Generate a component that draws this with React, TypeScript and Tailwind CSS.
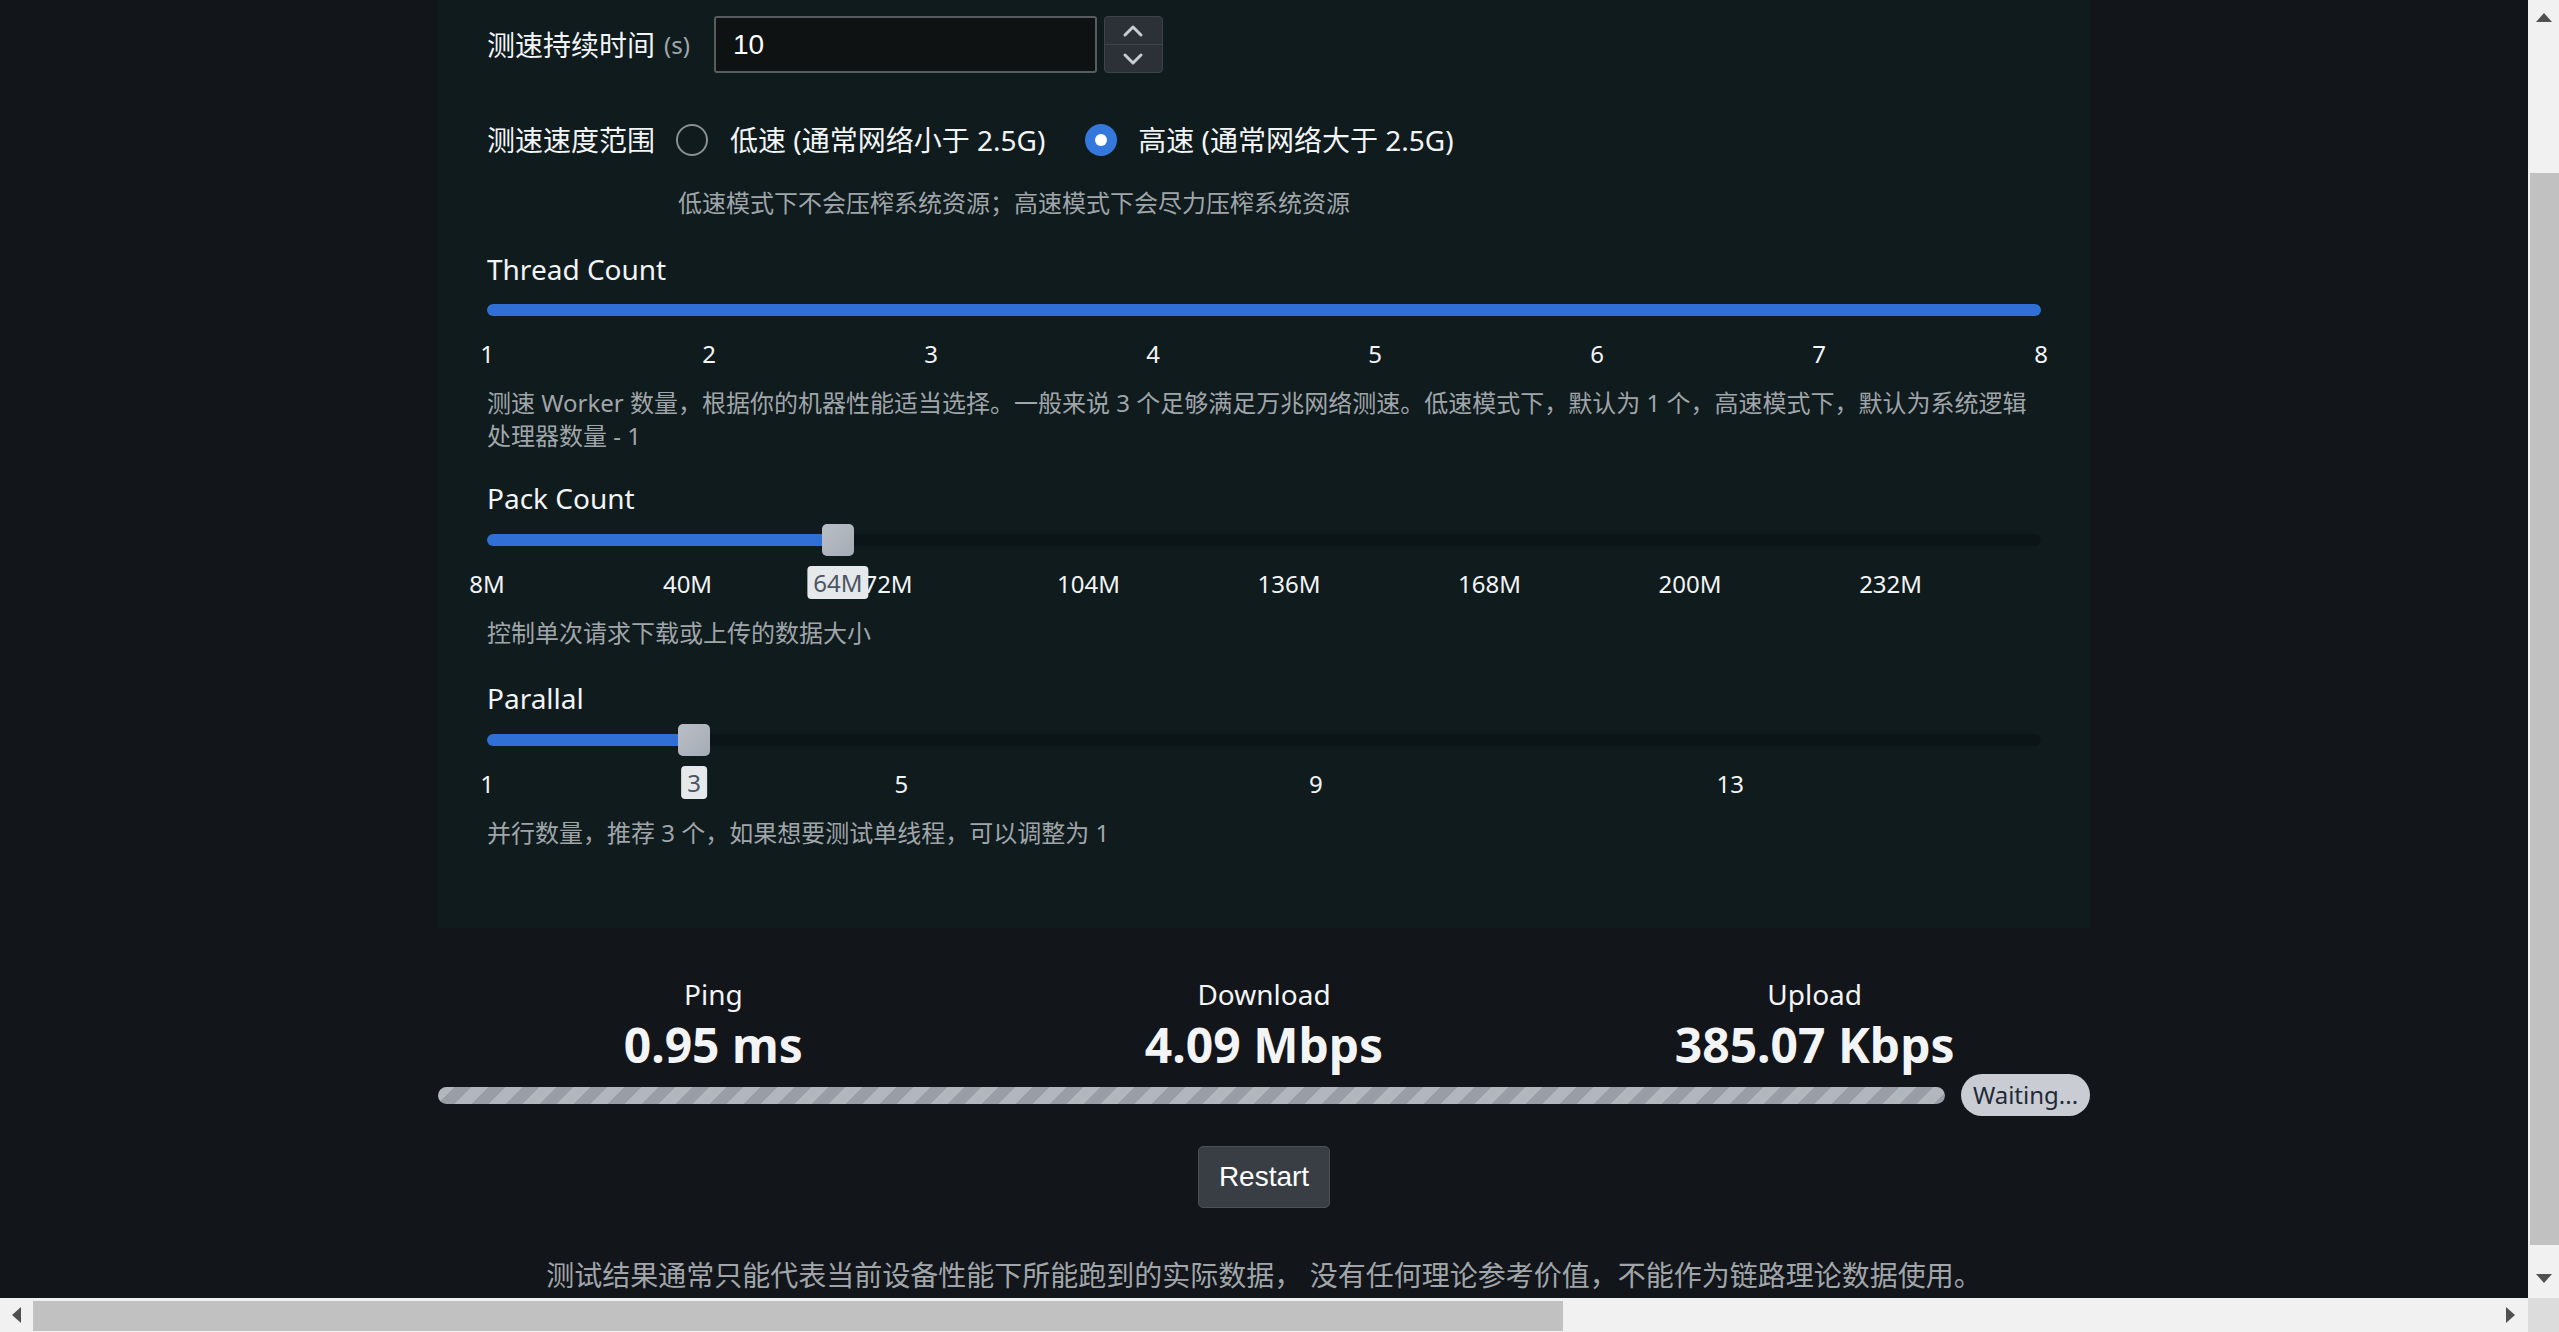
import React from "react";

const SANS = "font-['Noto_Sans','Noto_Sans_CJK_SC',sans-serif]";

function Ticks({ items, children }: { items: { label: string; pct: number }[]; children?: React.ReactNode }) {
  return (
    <div className="relative h-[33px] text-[24px] leading-[33px] text-[#f3f4f6]">
      {items.map((t) => (
        <span
          key={t.label}
          className="absolute top-0 -translate-x-1/2 whitespace-nowrap"
          style={{ left: `${t.pct}%` }}
        >
          {t.label}
        </span>
      ))}
      {children}
    </div>
  );
}

function Track({ pct, thumb }: { pct: number; thumb: boolean }) {
  return (
    <div className="relative h-[32px]">
      <div className="absolute left-0 right-0 top-[10px] h-[12px] rounded-full bg-[#0b1517]" />
      <div
        className="absolute left-0 top-[10px] h-[12px] rounded-full bg-[#2f6fd6]"
        style={{ width: `${pct}%` }}
      />
      {thumb && (
        <div
          className="absolute top-0 h-[32px] w-[32px] -translate-x-1/2 rounded-[5px] bg-gradient-to-br from-[#b9bec6] to-[#a6acb6]"
          style={{ left: `${pct}%` }}
        />
      )}
    </div>
  );
}

function Tip({ pct, text }: { pct: number; text: string }) {
  return (
    <span
      className="absolute top-[-1px] z-10 -translate-x-1/2 rounded-[4px] bg-[#e6e9ec] px-[6px] text-[24px] leading-[33px] text-[#4b5563]"
      style={{ left: `${pct}%` }}
    >
      {text}
    </span>
  );
}

function Radio({ checked }: { checked: boolean }) {
  return checked ? (
    <span className="flex h-[32px] w-[32px] shrink-0 items-center justify-center rounded-full bg-[#3478dc]">
      <span className="h-[12px] w-[12px] rounded-full bg-white" />
    </span>
  ) : (
    <span className="h-[32px] w-[32px] shrink-0 rounded-full border-2 border-[#8a8f94]" />
  );
}

function Chevron({ up }: { up: boolean }) {
  return (
    <svg width="22" height="14" viewBox="0 0 22 14" fill="none">
      <path
        d={up ? "M3 11 L11 3 L19 11" : "M3 3 L11 11 L19 3"}
        stroke="#c9cdd2"
        strokeWidth="3"
        strokeLinecap="round"
        strokeLinejoin="round"
      />
    </svg>
  );
}

export default function App() {
  const packTicks = [8, 40, 72, 104, 136, 168, 200, 232].map((v) => ({
    label: `${v}M`,
    pct: ((v - 8) / 248) * 100,
  }));
  const threadTicks = [1, 2, 3, 4, 5, 6, 7, 8].map((v) => ({ label: `${v}`, pct: ((v - 1) / 7) * 100 }));
  const parTicks = [1, 5, 9, 13].map((v) => ({ label: `${v}`, pct: ((v - 1) / 15) * 100 }));
  const packPct = ((64 - 8) / 248) * 100;
  const parPct = ((3 - 1) / 15) * 100;

  return (
    <div className={`flex h-[1332px] w-[2559px] flex-col overflow-hidden bg-[#121519] ${SANS}`}>
      <div className="flex min-h-0 flex-1">
        {/* page content */}
        <div className="flex min-w-0 flex-1 flex-col items-center overflow-hidden">
          <div className="flex w-[1652px] flex-col bg-[#0f1b1d] px-[49px] pb-[79px] text-[#f3f4f6]">
            {/* duration */}
            <div className="mt-[16px] flex h-[57px] items-center">
              <span className="text-[28px] leading-[40px]">测速持续时间</span>
              <span className="ml-[9px] text-[24px] leading-[40px] text-[#a0a5aa]">(s)</span>
              <div className="ml-[24px] flex h-[57px] w-[383px] items-center rounded-[3px] border-2 border-[#575c60] bg-[#0e1213] pl-[17px] font-['Liberation_Sans',sans-serif] text-[28px] text-white">
                10
              </div>
              <div className="ml-[7px] flex h-[57px] w-[59px] flex-col overflow-hidden rounded-[4px] border border-[#3d4449] bg-[#2b3136]">
                <div className="flex flex-1 items-center justify-center border-b border-[#3d4449]">
                  <Chevron up />
                </div>
                <div className="flex flex-1 items-center justify-center">
                  <Chevron up={false} />
                </div>
              </div>
            </div>

            {/* speed range */}
            <div className="mt-[47px] flex h-[40px] items-center">
              <span className="text-[28px] leading-[40px]">测速速度范围</span>
              <span className="ml-[21px] flex items-center">
                <Radio checked={false} />
                <span className="ml-[22px] text-[28px] leading-[40px]">低速 (通常网络小于 2.5G)</span>
              </span>
              <span className="ml-[40px] flex items-center">
                <Radio checked />
                <span className="ml-[21px] text-[28px] leading-[40px]">高速 (通常网络大于 2.5G)</span>
              </span>
            </div>
            <div className="ml-[191px] mt-[26px] text-[24px] leading-[33px] text-[#a0a5aa]">
              低速模式下不会压榨系统资源；高速模式下会尽力压榨系统资源
            </div>

            {/* thread count */}
            <div className="mt-[30px] text-[28px] leading-[40px]">Thread Count</div>
            <div className="mt-[5px]">
              <Track pct={100} thumb={false} />
            </div>
            <div className="mt-[11px]">
              <Ticks items={threadTicks} />
            </div>
            <div className="mt-[16px] text-[24px] leading-[33px] text-[#a0a5aa]">
              测速 Worker 数量，根据你的机器性能适当选择。一般来说 3 个足够满足万兆网络测速。低速模式下，默认为 1 个，高速模式下，默认为系统逻辑处理器数量 - 1
            </div>

            {/* pack count */}
            <div className="mt-[26px] text-[28px] leading-[40px]">Pack Count</div>
            <div className="mt-[6px]">
              <Track pct={packPct} thumb />
            </div>
            <div className="mt-[11px]">
              <Ticks items={packTicks}>
                <Tip pct={packPct} text="64M" />
              </Ticks>
            </div>
            <div className="mt-[16px] text-[24px] leading-[33px] text-[#a0a5aa]">控制单次请求下载或上传的数据大小</div>

            {/* parallal */}
            <div className="mt-[29px] text-[28px] leading-[40px]">Parallal</div>
            <div className="mt-[6px]">
              <Track pct={parPct} thumb />
            </div>
            <div className="mt-[11px]">
              <Ticks items={parTicks}>
                <Tip pct={parPct} text="3" />
              </Ticks>
            </div>
            <div className="mt-[16px] text-[24px] leading-[33px] text-[#a0a5aa]">
              并行数量，推荐 3 个，如果想要测试单线程，可以调整为 1
            </div>
          </div>

          {/* results */}
          <div className="flex w-[1652px] flex-col text-[#f3f4f6]">
            <div className="mt-[46px] grid grid-cols-3">
              {[
                ["Ping", "0.95 ms"],
                ["Download", "4.09 Mbps"],
                ["Upload", "385.07 Kbps"],
              ].map(([l, v]) => (
                <div key={l} className="flex flex-col items-center">
                  <span className="text-[28px] leading-[40px]">{l}</span>
                  <span className="mt-[3px] text-[48px] font-bold leading-[56px]">{v}</span>
                </div>
              ))}
            </div>
            <div className="mt-[1px] flex h-[42px] items-center gap-[16px]">
              <div className="h-[17px] flex-1 rounded-full bg-[#979ea6] bg-[linear-gradient(135deg,rgba(255,255,255,0.26)_25%,transparent_25%,transparent_50%,rgba(255,255,255,0.26)_50%,rgba(255,255,255,0.26)_75%,transparent_75%,transparent)] bg-[length:34px_34px]" />
              <div className="flex h-[42px] w-[129px] items-center justify-center rounded-full bg-[#c9cdd3] text-[24px] text-[#1f2937]">
                Waiting...
              </div>
            </div>
            <div className="mt-[30px] flex justify-center">
              <button className="h-[62px] w-[132px] rounded-[5px] border border-[#4b5157] bg-[#393e45] font-['Liberation_Sans',sans-serif] text-[28px] text-white">
                Restart
              </button>
            </div>
            <div className="mt-[47px] whitespace-nowrap text-center text-[28px] leading-[40px] text-[#a0a5aa]">
              测试结果通常只能代表当前设备性能下所能跑到的实际数据， 没有任何理论参考价值，不能作为链路理论数据使用。
            </div>
          </div>
        </div>

        {/* vertical scrollbar */}
        <div className="flex w-[31px] shrink-0 flex-col bg-[#f1f1f1]">
          <div className="flex h-[34px] items-center justify-center">
            <svg width="16" height="9" viewBox="0 0 16 9">
              <polygon points="0,9 8,0 16,9" fill="#505050" />
            </svg>
          </div>
          <div className="mt-[139px] ml-[2px] h-[1072px] bg-[#c1c1c1]" />
          <div className="flex-1" />
          <div className="flex h-[40px] items-center justify-center">
            <svg width="16" height="9" viewBox="0 0 16 9">
              <polygon points="0,0 16,0 8,9" fill="#505050" />
            </svg>
          </div>
        </div>
      </div>

      {/* horizontal scrollbar */}
      <div className="flex h-[34px] shrink-0">
        <div className="flex flex-1 items-center bg-[#f1f1f1]">
          <div className="flex w-[33px] items-center justify-center">
            <svg width="9" height="16" viewBox="0 0 9 16">
              <polygon points="9,0 9,16 0,8" fill="#505050" />
            </svg>
          </div>
          <div className="mt-[1px] h-[30px] w-[1530px] bg-[#c1c1c1]" />
          <div className="flex-1" />
          <div className="flex w-[36px] items-center justify-center">
            <svg width="9" height="16" viewBox="0 0 9 16">
              <polygon points="0,0 9,8 0,16" fill="#505050" />
            </svg>
          </div>
        </div>
        <div className="w-[31px] bg-[#dcdcdc]" />
      </div>
    </div>
  );
}
